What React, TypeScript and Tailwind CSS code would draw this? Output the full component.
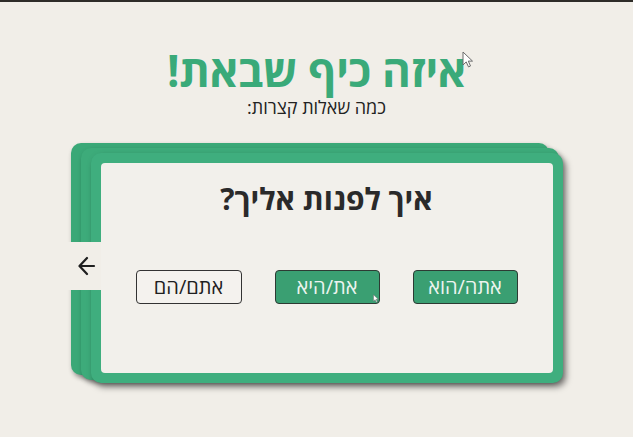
import React from "react";

const font = { fontFamily: '"Open Sans", "Liberation Sans", "DejaVu Sans", sans-serif' };

function Cursor({ className }: { className: string }) {
  return (
    <svg className={className} width="12" height="17" viewBox="0 0 12 17" fill="#ffffff" stroke="#6b6b6b" strokeWidth="1" strokeLinejoin="round">
      <path d="M1 1v13l3.2-3.1 2.3 5 2-.9-2.2-4.9H10.5z" />
    </svg>
  );
}

export default function App() {
  return (
    <div
      dir="rtl"
      style={font}
      className="relative w-[633px] h-[437px] overflow-hidden bg-[#f1eee8] border-t-2 border-[#2e2c28] flex flex-col items-center"
    >
      <h1 className="mt-[42px] text-[44px] leading-[52px] font-bold text-[#3aaa79] tracking-[-0.3px]">
        איזה כיף שבאת!
      </h1>
      <p className="mt-[1px] text-[18px] leading-[20px] text-[#222]">כמה שאלות קצרות:</p>

      <div className="relative mt-[26px] w-[492px] h-[242px]" dir="ltr">
        <div className="absolute left-0 top-0 w-[478px] h-[232px] rounded-[10px] bg-[#3aa877] shadow-[2px_3px_5px_rgba(0,0,0,0.45)]" />
        <div className="absolute left-[10px] top-[5px] w-[478px] h-[232px] rounded-[10px] bg-[#3dab7a] shadow-[2px_3px_5px_rgba(0,0,0,0.45)]" />
        <div className="absolute left-[-6px] top-[99px] w-[36px] h-[48px] bg-[#f1eee8] flex items-center justify-center z-10">
          <svg width="18" height="20" viewBox="0 0 18 20" fill="none" stroke="#1f1f1f" strokeWidth="2.2" strokeLinecap="round" strokeLinejoin="round" className="ml-[8px]">
            <path d="M16 10H2" />
            <path d="M9 2 1.5 10 9 18" />
          </svg>
        </div>
        <div className="absolute left-[20px] top-[10px] w-[472px] h-[230px] rounded-[10px] bg-[#3fae7e] p-[10px] shadow-[3px_4px_6px_rgba(0,0,0,0.5)]">
          <div dir="rtl" className="w-full h-full rounded-[4px] bg-[#f2f0eb] flex flex-col items-center">
            <h2 className="mt-[18px] text-[30px] leading-[35px] font-bold text-[#2a2a2a]">איך לפנות אליך?</h2>
            <div className="mt-[54px] flex gap-[33px]">
              <button className="w-[105px] h-[34px] rounded-[4px] border-[1.5px] border-[#2d3a33] bg-[#3a9f72] text-[#edf4ef] text-[20px] leading-none">
                אתה/הוא
              </button>
              <button className="w-[105px] h-[34px] rounded-[4px] border-[1.5px] border-[#2d3a33] bg-[#3a9f72] text-[#edf4ef] text-[20px] leading-none">
                את/היא
              </button>
              <button className="w-[106px] h-[34px] rounded-[4px] border-[1.5px] border-[#333] bg-[#f4f2ee] text-[#1f1f1f] text-[20px] leading-none">
                אתם/הם
              </button>
            </div>
          </div>
        </div>
      </div>

      <Cursor className="absolute left-[462px] top-[49px]" />
      <Cursor className="absolute left-[373px] top-[292px] w-[6px] h-[9px]" />
    </div>
  );
}
